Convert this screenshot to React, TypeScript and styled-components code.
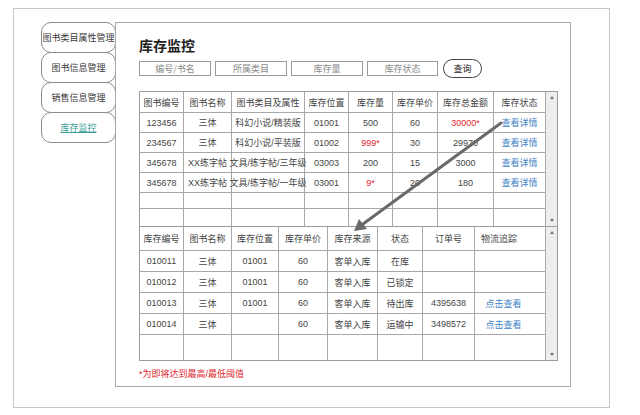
import styled, { createGlobalStyle } from "styled-components";

const GlobalStyle = createGlobalStyle`
  html, body {
    margin: 0;
    padding: 0;
    background: #fff;
    overflow: hidden;
  }
  body {
    font-family: "Liberation Sans", "Noto Sans CJK SC", sans-serif;
    color: #444;
  }
`;

type CellValue = { text: string; tone?: "red" | "link" };

const stockCols = [44, 48, 73, 44, 44, 45, 56, 52];
const stockHeader = [
  "图书编号",
  "图书名称",
  "图书类目及属性",
  "库存位置",
  "库存量",
  "库存单价",
  "库存总金额",
  "库存状态",
];
const stockRows: CellValue[][] = [
  [
    { text: "123456" },
    { text: "三体" },
    { text: "科幻小说/精装版" },
    { text: "01001" },
    { text: "500" },
    { text: "60" },
    { text: "30000*", tone: "red" },
    { text: "查看详情", tone: "link" },
  ],
  [
    { text: "234567" },
    { text: "三体" },
    { text: "科幻小说/平装版" },
    { text: "01002" },
    { text: "999*", tone: "red" },
    { text: "30" },
    { text: "29970" },
    { text: "查看详情", tone: "link" },
  ],
  [
    { text: "345678" },
    { text: "XX练字帖" },
    { text: "文具/练字帖/三年级" },
    { text: "03003" },
    { text: "200" },
    { text: "15" },
    { text: "3000" },
    { text: "查看详情", tone: "link" },
  ],
  [
    { text: "345678" },
    { text: "XX练字帖" },
    { text: "文具/练字帖/一年级" },
    { text: "03001" },
    { text: "9*", tone: "red" },
    { text: "20" },
    { text: "180" },
    { text: "查看详情", tone: "link" },
  ],
];

const itemCols = [44, 48, 47, 49, 50, 45, 52, 71];
const itemHeader = [
  "库存编号",
  "图书名称",
  "库存位置",
  "库存单价",
  "库存来源",
  "状态",
  "订单号",
  "物流追踪",
];
const itemRows: CellValue[][] = [
  ["010011", "三体", "01001", "60", "客单入库", "在库", "", ""],
  ["010012", "三体", "01001", "60", "客单入库", "已锁定", "", ""],
  ["010013", "三体", "01001", "60", "客单入库", "待出库", "4395638", "点击查看"],
  ["010014", "三体", "", "60", "客单入库", "运输中", "3498572", "点击查看"],
].map((row) =>
  row.map((text, i) => ({ text, tone: i === 7 && text ? "link" : undefined }))
);

const navItems = ["图书类目属性管理", "图书信息管理", "销售信息管理", "库存监控"];
const filters = ["编号/书名", "所属类目", "库存量", "库存状态"];

const emptyRow = (n: number): CellValue[] =>
  Array.from({ length: n }, () => ({ text: "" }));

interface SectionProps {
  cols: number[];
  header: string[];
  rows: CellValue[][];
  headerHeight: number;
  rowHeights: number[];
  lastCol?: { header: number; body: number };
}

const DataSection = ({
  cols,
  header,
  rows,
  headerHeight,
  rowHeights,
  lastCol,
}: SectionProps) => {
  const template = cols.map((c) => `${c}px`).join(" ");
  return (
    <Section>
      <Rows>
        <Row $cols={template} $h={headerHeight}>
          {header.map((h, i) => (
            <Cell
              key={h}
              $shift={lastCol && i === cols.length - 1 ? lastCol.header : 0}
            >
              {h}
            </Cell>
          ))}
        </Row>
        {rows.map((row, r) => (
          <Row key={r} $cols={template} $h={rowHeights[r]}>
            {row.map((cell, i) => (
              <Cell
                key={i}
                $tone={cell.tone}
                $shift={lastCol && i === cols.length - 1 ? lastCol.body : 0}
              >
                {cell.text}
              </Cell>
            ))}
          </Row>
        ))}
      </Rows>
      <ScrollBar>
        <ScrollArrow $dir="up" />
        <ScrollArrow $dir="down" />
      </ScrollBar>
    </Section>
  );
};

export default function App() {
  return (
    <Page>
      <GlobalStyle />
      <Frame>
        <Sidebar>
          {navItems.map((item) => (
            <NavButton key={item} $active={item === "库存监控"}>
              <span>{item}</span>
            </NavButton>
          ))}
        </Sidebar>
        <Panel>
          <Title>库存监控</Title>
          <SearchRow>
            {filters.map((f, i) => (
              <SearchInput key={f} placeholder={f} $w={i === 3 ? 71 : 72} />
            ))}
            <QueryButton>查询</QueryButton>
          </SearchRow>
          <TableBox>
            <DataSection
              cols={stockCols}
              header={stockHeader}
              rows={[...stockRows, emptyRow(8), emptyRow(8)]}
              headerHeight={21}
              rowHeights={[20, 20, 20, 20, 16, 17]}
            />
            <DataSection
              cols={itemCols}
              header={itemHeader}
              rows={[...itemRows, emptyRow(8)]}
              headerHeight={24}
              rowHeights={[21, 21, 21, 21, 25]}
              lastCol={{ header: -22, body: -13 }}
            />
          </TableBox>
          <Note>*为即将达到最高/最低阈值</Note>
        </Panel>
      </Frame>
      <Overlay width="640" height="415" viewBox="0 0 640 415">
        <line
          x1="501"
          y1="123"
          x2="363"
          y2="224"
          stroke="#6a6a6a"
          strokeWidth="3"
          strokeLinecap="round"
        />
        <polygon points="354,231 359,219 367,229" fill="#6a6a6a" />
      </Overlay>
    </Page>
  );
}

const Page = styled.div`
  position: relative;
  width: 640px;
  height: 415px;
  overflow: hidden;
`;

const Frame = styled.div`
  box-sizing: border-box;
  display: flex;
  align-items: flex-start;
  width: 597px;
  height: 400px;
  margin: 8px 0 0 13px;
  padding: 13px 0 0 27px;
  border: 1px solid #c6c6c6;
`;

const Sidebar = styled.div`
  display: flex;
  flex-direction: column;
  width: 75px;
  flex-shrink: 0;
`;

const NavButton = styled.div<{ $active?: boolean }>`
  box-sizing: border-box;
  display: flex;
  align-items: center;
  justify-content: center;
  height: 31px;
  border: 1px solid #8c8c8c;
  border-radius: 10px;
  background: #fff;
  font-family: "Noto Sans CJK SC", sans-serif;
  font-size: 9px;
  white-space: nowrap;
  color: ${({ $active }) => ($active ? "#3c9c98" : "#3a3a3a")};
  text-decoration: ${({ $active }) => ($active ? "underline" : "none")};

  & + & {
    margin-top: -1px;
  }
`;

const Panel = styled.div`
  box-sizing: border-box;
  width: 456px;
  height: 365px;
  margin-left: -1px;
  padding: 13px 0 0 23px;
  border: 1px solid #a9a9a9;
  background: #fff;
`;

const Title = styled.h1`
  margin: 0;
  font-family: "Noto Sans CJK SC", sans-serif;
  font-size: 14px;
  line-height: 18px;
  font-weight: 700;
  color: #222;
`;

const SearchRow = styled.div`
  display: flex;
  align-items: center;
  gap: 4px;
  height: 19px;
  margin-top: 5px;
`;

const SearchInput = styled.input<{ $w: number }>`
  box-sizing: border-box;
  width: ${({ $w }) => $w}px;
  height: 15px;
  padding: 0;
  border: 1px solid #9a9a9a;
  border-radius: 0;
  outline: none;
  text-align: center;
  font-family: "Noto Sans CJK SC", sans-serif;
  font-size: 9px;
  color: #555;

  &::placeholder {
    color: #8a8a8a;
  }
`;

const QueryButton = styled.button`
  box-sizing: border-box;
  width: 39px;
  height: 19px;
  margin-left: 1px;
  padding: 0;
  border: 1px solid #444;
  border-radius: 10px;
  background: #fff;
  font-family: "Noto Sans CJK SC", sans-serif;
  font-size: 9px;
  color: #222;
`;

const TableBox = styled.div`
  box-sizing: border-box;
  width: 419px;
  margin-top: 13px;
  border: 1px solid #9c9c9c;
`;

const Section = styled.div`
  display: flex;

  & + & {
    border-top: 1px solid #9c9c9c;
  }
`;

const Rows = styled.div`
  display: flex;
  flex-direction: column;
  width: 406px;
`;

const Row = styled.div<{ $cols: string; $h: number }>`
  box-sizing: border-box;
  display: grid;
  grid-template-columns: ${({ $cols }) => $cols};
  height: ${({ $h }) => $h}px;
  border-bottom: 1px solid #a8a8a8;

  &:last-child {
    border-bottom: none;
  }
`;

const toneColor = {
  red: "#e0262f",
  link: "#3f82c6",
};

const Cell = styled.div<{ $tone?: "red" | "link"; $shift?: number }>`
  box-sizing: border-box;
  display: flex;
  align-items: center;
  justify-content: center;
  padding-right: ${({ $shift }) => ($shift ? -$shift : 0)}px;
  border-right: 1px solid #a8a8a8;
  white-space: nowrap;
  font-size: 9px;
  color: ${({ $tone }) => ($tone ? toneColor[$tone] : "#444")};
  overflow: visible;
`;

const ScrollBar = styled.div`
  display: flex;
  flex-direction: column;
  justify-content: space-between;
  align-items: center;
  width: 11px;
  padding: 4px 0;
  box-sizing: border-box;
  background: #ededed;
`;

const ScrollArrow = styled.div<{ $dir: "up" | "down" }>`
  width: 0;
  height: 0;
  border-left: 2.5px solid transparent;
  border-right: 2.5px solid transparent;
  ${({ $dir }) =>
    $dir === "up"
      ? "border-bottom: 3px solid #707070;"
      : "border-top: 3px solid #707070;"}
`;

const Note = styled.div`
  margin-top: 8px;
  font-family: "Liberation Sans", "Noto Sans CJK SC", sans-serif;
  font-size: 9px;
  line-height: 11px;
  color: #e0262f;
`;

const Overlay = styled.svg`
  position: absolute;
  top: 0;
  left: 0;
  pointer-events: none;
`;
